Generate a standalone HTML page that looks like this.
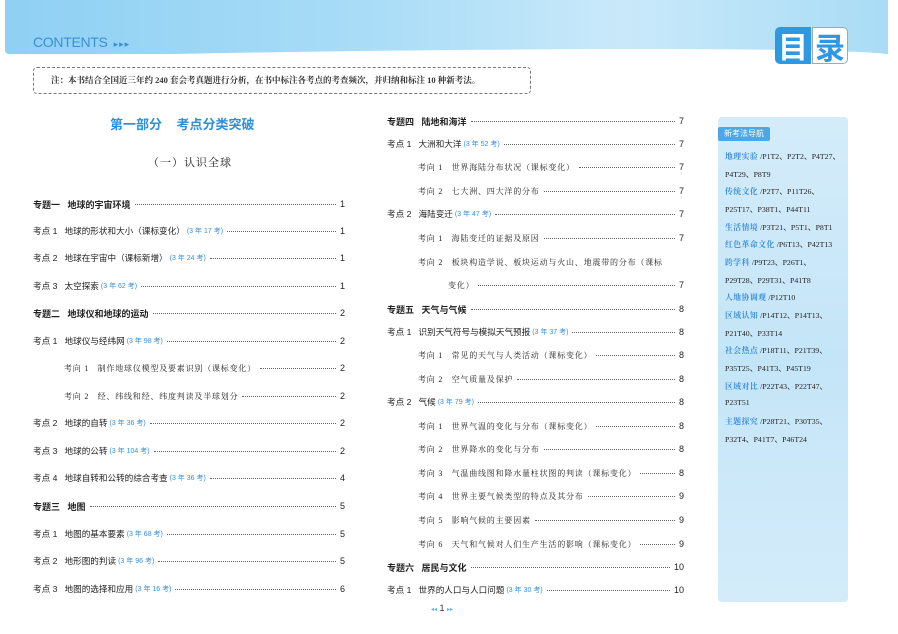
<!DOCTYPE html>
<html><head><meta charset="utf-8"><style>
*{margin:0;padding:0;box-sizing:border-box}
body{width:898px;height:634px;background:#fff;position:relative;overflow:hidden;font-family:"Liberation Sans","Noto Sans CJK SC",sans-serif;color:#222}
.band{position:absolute;left:5px;top:0;width:883px;height:54px;background:linear-gradient(90deg,#8fd0f3 0%,#a8dcf7 40%,#c9e9fa 70%,#a9dcf6 100%);border-bottom-left-radius:4px}
.band:after{content:"";position:absolute;left:0;right:0;bottom:-4px;height:8px;background:#fff;border-radius:60% 40% 0 0/100% 100% 0 0;transform:skewY(-0.4deg)}
.cont{position:absolute;left:33px;top:34px;font-size:14px;color:#3a8fd9;letter-spacing:-0.3px}
.cont span{font-size:9px;letter-spacing:1px;margin-left:6px}
.ml{position:absolute;top:27px;width:36px;height:37px;font-size:30px;font-weight:bold;line-height:36px;text-align:center;font-family:"Noto Sans CJK SC",sans-serif}
.note{position:absolute;left:33px;top:67px;width:498px;height:27px;border:1px dashed #777;border-radius:4px;font-size:8.5px;line-height:25px;padding-left:17px;font-family:"Liberation Serif","Noto Serif CJK SC",serif;font-weight:bold;color:#333}
.r{position:absolute;display:flex;align-items:center;height:12px;font-size:8.6px;white-space:nowrap}
.r .f{flex:1;border-bottom:1px dotted #666;margin:0 4px;height:1px;align-self:center}
.r .p{font-size:9px}
.b{font-weight:bold;font-size:9px}
.k{color:#3a8fd9;font-size:7px;margin-left:2px}
.s{font-family:"Liberation Serif","Noto Serif CJK SC",serif;font-size:8px;letter-spacing:0.8px}
.side{position:absolute;left:718px;top:117px;width:130px;height:485px;background:linear-gradient(180deg,#d4ecfa,#c4e5f8 50%,#d4ecfa);border-radius:4px}
.tag{position:absolute;left:718px;top:127px;width:52px;height:14px;background:#4aa8e8;color:#fff;font-size:8px;line-height:14px;text-align:center;border-radius:2px}
.sl{position:absolute;left:725px;font-size:7.8px;white-space:nowrap;font-family:"Liberation Serif",serif;color:#222}
.sl i{font-style:normal;color:#3a8fd9;font-family:"Noto Serif CJK SC",serif;font-weight:bold;letter-spacing:0.5px}
</style></head><body>
<div class="band"></div>
<div class="cont">CONTENTS<span>▸▸▸</span></div>
<div class="ml" style="left:775px;background:#2e98e2;color:#fff;border-radius:5px 0 0 5px">目</div>
<div class="ml" style="left:812px;background:#fff;color:#2e98e2;border:1px solid #9ab;border-radius:0 5px 5px 0">录</div>
<div class="note">注：本书结合全国近三年约 240 套会考真题进行分析，在书中标注各考点的考查频次，并归纳和标注 10 种新考法。</div>

<div style="position:absolute;left:110px;top:114px;font-size:13px;font-weight:bold;color:#2e8fdc">第一部分&nbsp;&nbsp;&nbsp;&nbsp;考点分类突破</div>
<div style="position:absolute;left:148px;top:154px;font-size:11px;letter-spacing:1px;font-family:'Noto Serif CJK SC',serif">（一）认识全球</div>

<div class="r" style="left:33px;width:312px;top:198px"><span class="b">专题一&nbsp;&nbsp;&nbsp;地球的宇宙环境</span><span class="f"></span><span class="p">1</span></div>
<div class="r" style="left:33px;width:312px;top:225px"><span>考点 1&nbsp;&nbsp;&nbsp;地球的形状和大小（课标变化）</span><span class="k">(3 年 17 考)</span><span class="f"></span><span class="p">1</span></div>
<div class="r" style="left:33px;width:312px;top:252px"><span>考点 2&nbsp;&nbsp;&nbsp;地球在宇宙中（课标新增）</span><span class="k">(3 年 24 考)</span><span class="f"></span><span class="p">1</span></div>
<div class="r" style="left:33px;width:312px;top:280px"><span>考点 3&nbsp;&nbsp;&nbsp;太空探索</span><span class="k">(3 年 62 考)</span><span class="f"></span><span class="p">1</span></div>
<div class="r" style="left:33px;width:312px;top:307px"><span class="b">专题二&nbsp;&nbsp;&nbsp;地球仪和地球的运动</span><span class="f"></span><span class="p">2</span></div>
<div class="r" style="left:33px;width:312px;top:335px"><span>考点 1&nbsp;&nbsp;&nbsp;地球仪与经纬网</span><span class="k">(3 年 98 考)</span><span class="f"></span><span class="p">2</span></div>
<div class="r" style="left:64px;width:281px;top:362px"><span class="s">考向 1&nbsp;&nbsp;&nbsp;制作地球仪模型及要素识别（课标变化）</span><span class="f"></span><span class="p">2</span></div>
<div class="r" style="left:64px;width:281px;top:390px"><span class="s">考向 2&nbsp;&nbsp;&nbsp;经、纬线和经、纬度判读及半球划分</span><span class="f"></span><span class="p">2</span></div>
<div class="r" style="left:33px;width:312px;top:417px"><span>考点 2&nbsp;&nbsp;&nbsp;地球的自转</span><span class="k">(3 年 36 考)</span><span class="f"></span><span class="p">2</span></div>
<div class="r" style="left:33px;width:312px;top:445px"><span>考点 3&nbsp;&nbsp;&nbsp;地球的公转</span><span class="k">(3 年 104 考)</span><span class="f"></span><span class="p">2</span></div>
<div class="r" style="left:33px;width:312px;top:472px"><span>考点 4&nbsp;&nbsp;&nbsp;地球自转和公转的综合考查</span><span class="k">(3 年 36 考)</span><span class="f"></span><span class="p">4</span></div>
<div class="r" style="left:33px;width:312px;top:500px"><span class="b">专题三&nbsp;&nbsp;&nbsp;地图</span><span class="f"></span><span class="p">5</span></div>
<div class="r" style="left:33px;width:312px;top:528px"><span>考点 1&nbsp;&nbsp;&nbsp;地图的基本要素</span><span class="k">(3 年 68 考)</span><span class="f"></span><span class="p">5</span></div>
<div class="r" style="left:33px;width:312px;top:555px"><span>考点 2&nbsp;&nbsp;&nbsp;地形图的判读</span><span class="k">(3 年 96 考)</span><span class="f"></span><span class="p">5</span></div>
<div class="r" style="left:33px;width:312px;top:583px"><span>考点 3&nbsp;&nbsp;&nbsp;地图的选择和应用</span><span class="k">(3 年 16 考)</span><span class="f"></span><span class="p">6</span></div>

<div class="r" style="left:387px;width:297px;top:115px"><span class="b">专题四&nbsp;&nbsp;&nbsp;陆地和海洋</span><span class="f"></span><span class="p">7</span></div>
<div class="r" style="left:387px;width:297px;top:138px"><span>考点 1&nbsp;&nbsp;&nbsp;大洲和大洋</span><span class="k">(3 年 52 考)</span><span class="f"></span><span class="p">7</span></div>
<div class="r" style="left:418px;width:266px;top:161px"><span class="s">考向 1&nbsp;&nbsp;&nbsp;世界海陆分布状况（课标变化）</span><span class="f"></span><span class="p">7</span></div>
<div class="r" style="left:418px;width:266px;top:185px"><span class="s">考向 2&nbsp;&nbsp;&nbsp;七大洲、四大洋的分布</span><span class="f"></span><span class="p">7</span></div>
<div class="r" style="left:387px;width:297px;top:208px"><span>考点 2&nbsp;&nbsp;&nbsp;海陆变迁</span><span class="k">(3 年 47 考)</span><span class="f"></span><span class="p">7</span></div>
<div class="r" style="left:418px;width:266px;top:232px"><span class="s">考向 1&nbsp;&nbsp;&nbsp;海陆变迁的证据及原因</span><span class="f"></span><span class="p">7</span></div>
<div class="r" style="left:418px;width:266px;top:256px"><span class="s">考向 2&nbsp;&nbsp;&nbsp;板块构造学说、板块运动与火山、地震带的分布（课标</span></div>
<div class="r" style="left:448px;width:236px;top:279px"><span class="s">变化）</span><span class="f"></span><span class="p">7</span></div>
<div class="r" style="left:387px;width:297px;top:303px"><span class="b">专题五&nbsp;&nbsp;&nbsp;天气与气候</span><span class="f"></span><span class="p">8</span></div>
<div class="r" style="left:387px;width:297px;top:326px"><span>考点 1&nbsp;&nbsp;&nbsp;识别天气符号与模拟天气预报</span><span class="k">(3 年 37 考)</span><span class="f"></span><span class="p">8</span></div>
<div class="r" style="left:418px;width:266px;top:349px"><span class="s">考向 1&nbsp;&nbsp;&nbsp;常见的天气与人类活动（课标变化）</span><span class="f"></span><span class="p">8</span></div>
<div class="r" style="left:418px;width:266px;top:373px"><span class="s">考向 2&nbsp;&nbsp;&nbsp;空气质量及保护</span><span class="f"></span><span class="p">8</span></div>
<div class="r" style="left:387px;width:297px;top:396px"><span>考点 2&nbsp;&nbsp;&nbsp;气候</span><span class="k">(3 年 79 考)</span><span class="f"></span><span class="p">8</span></div>
<div class="r" style="left:418px;width:266px;top:420px"><span class="s">考向 1&nbsp;&nbsp;&nbsp;世界气温的变化与分布（课标变化）</span><span class="f"></span><span class="p">8</span></div>
<div class="r" style="left:418px;width:266px;top:443px"><span class="s">考向 2&nbsp;&nbsp;&nbsp;世界降水的变化与分布</span><span class="f"></span><span class="p">8</span></div>
<div class="r" style="left:418px;width:266px;top:467px"><span class="s">考向 3&nbsp;&nbsp;&nbsp;气温曲线图和降水量柱状图的判读（课标变化）</span><span class="f"></span><span class="p">8</span></div>
<div class="r" style="left:418px;width:266px;top:490px"><span class="s">考向 4&nbsp;&nbsp;&nbsp;世界主要气候类型的特点及其分布</span><span class="f"></span><span class="p">9</span></div>
<div class="r" style="left:418px;width:266px;top:514px"><span class="s">考向 5&nbsp;&nbsp;&nbsp;影响气候的主要因素</span><span class="f"></span><span class="p">9</span></div>
<div class="r" style="left:418px;width:266px;top:538px"><span class="s">考向 6&nbsp;&nbsp;&nbsp;天气和气候对人们生产生活的影响（课标变化）</span><span class="f"></span><span class="p">9</span></div>
<div class="r" style="left:387px;width:297px;top:561px"><span class="b">专题六&nbsp;&nbsp;&nbsp;居民与文化</span><span class="f"></span><span class="p">10</span></div>
<div class="r" style="left:387px;width:297px;top:584px"><span>考点 1&nbsp;&nbsp;&nbsp;世界的人口与人口问题</span><span class="k">(3 年 30 考)</span><span class="f"></span><span class="p">10</span></div>
<div style="position:absolute;left:431px;top:603px;font-size:9px;color:#333"><span style="color:#5ab0e8;font-size:6px">◂◂</span> 1 <span style="color:#5ab0e8;font-size:6px">▸▸</span></div>

<div class="side"></div>
<div class="tag">新考法导航</div>
<div class="sl" style="top:151px"><i>地理实验</i> /P1T2、P2T2、P4T27、</div>
<div class="sl" style="top:169px">P4T29、P8T9</div>
<div class="sl" style="top:186px"><i>传统文化</i> /P2T7、P11T26、</div>
<div class="sl" style="top:204px">P25T17、P38T1、P44T11</div>
<div class="sl" style="top:222px"><i>生活情境</i> /P3T21、P5T1、P8T1</div>
<div class="sl" style="top:239px"><i>红色革命文化</i> /P6T13、P42T13</div>
<div class="sl" style="top:257px"><i>跨学科</i> /P9T23、P26T1、</div>
<div class="sl" style="top:275px">P29T28、P29T31、P41T8</div>
<div class="sl" style="top:292px"><i>人地协调观</i> /P12T10</div>
<div class="sl" style="top:310px"><i>区域认知</i> /P14T12、P14T13、</div>
<div class="sl" style="top:328px">P21T40、P33T14</div>
<div class="sl" style="top:345px"><i>社会热点</i> /P18T11、P21T39、</div>
<div class="sl" style="top:363px">P35T25、P41T3、P45T19</div>
<div class="sl" style="top:381px"><i>区域对比</i> /P22T43、P22T47、</div>
<div class="sl" style="top:398px">P23T51</div>
<div class="sl" style="top:416px"><i>主题探究</i> /P28T21、P30T35、</div>
<div class="sl" style="top:434px">P32T4、P41T7、P46T24</div>
</body></html>
